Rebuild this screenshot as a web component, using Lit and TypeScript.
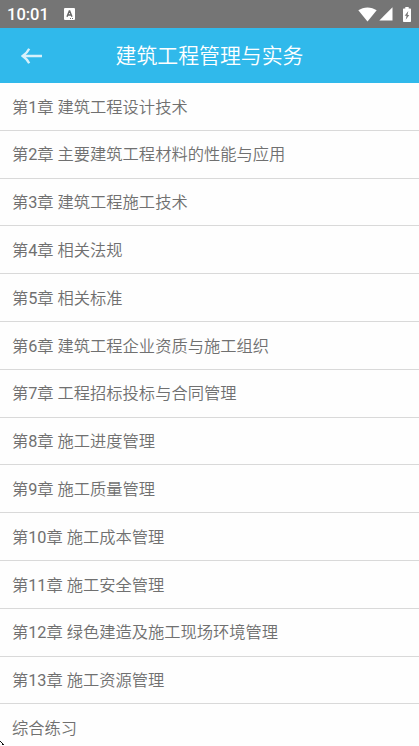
import { LitElement, html, css } from "lit";
import { customElement } from "lit/decorators.js";

const CHAPTERS = [
  "第1章 建筑工程设计技术",
  "第2章 主要建筑工程材料的性能与应用",
  "第3章 建筑工程施工技术",
  "第4章 相关法规",
  "第5章 相关标准",
  "第6章 建筑工程企业资质与施工组织",
  "第7章 工程招标投标与合同管理",
  "第8章 施工进度管理",
  "第9章 施工质量管理",
  "第10章 施工成本管理",
  "第11章 施工安全管理",
  "第12章 绿色建造及施工现场环境管理",
  "第13章 施工资源管理",
  "综合练习",
];

// Digits carry a slightly heavier weight than the Chinese text around them.
const withDigits = (name: string) =>
  name.split(/(\d+)/).map((part) => (/^\d+$/.test(part) ? html`<span class="digits">${part}</span>` : part));

@customElement("status-bar")
class StatusBar extends LitElement {
  static styles = css`
    :host {
      display: flex;
      align-items: center;
      height: 28px;
      flex: none;
      box-sizing: border-box;
      padding: 0 7px;
      background: #757575;
      color: #fff;
      font: 500 16.5px/28px Roboto, sans-serif;
    }
    .time { width: 57px; padding-top: 1px; }
    .spacer { flex: 1; }
    svg { display: block; flex: none; fill: #fff; }
    .wifi { margin-right: 2px; }
    .signal { margin-right: 10px; }
    .battery { margin-right: 1px; }
    .hole { fill: #757575; }
    .letter { fill: none; stroke: #666; stroke-width: 1.4; }
  `;
  render() {
    return html`
      <span class="time">10:01</span>
      <svg width="11" height="12" viewBox="0 0 11 12">
        <rect width="11" height="12" rx="1" />
        <path class="letter" d="M3 8.8 5.3 3h.4L8 8.8M3.8 7h3.4" />
        <path class="hole" d="M6 10h1v1H6zM8 10h1v1H8z" />
      </svg>
      <span class="spacer"></span>
      <svg class="wifi" width="19" height="15" viewBox="0 0 19 15">
        <path d="M0.3 3.3C5.5-.6 13.5-.6 18.7 3.3L9.5 14.6Z" />
      </svg>
      <svg class="signal" width="14" height="14" viewBox="0 0 14 14">
        <path d="M13.5 0.3V13.5H0.3Z" />
      </svg>
      <svg class="battery" width="8" height="15" viewBox="0 0 8 15">
        <path d="M2.3 0h3.4v1.6H7.3q.7 0 .7.7V14.3q0 .7-.7.7H.7Q0 15 0 14.3V2.3q0-.7.7-.7H2.3Z" />
        <path class="hole" d="M5.3 4 1.7 8.8H3.6L2.7 12.8 6.3 7.9H4.5Z" />
      </svg>
    `;
  }
}

@customElement("title-bar")
class TitleBar extends LitElement {
  static styles = css`
    :host {
      display: grid;
      grid-template-columns: 62px 1fr 62px;
      align-items: center;
      height: 55px;
      flex: none;
      background: #30b9eb;
      color: #fff;
    }
    svg { display: block; margin-left: 21px; fill: none; stroke: #d6f1fb; stroke-width: 2.3; }
    .title {
      margin: 0;
      text-align: center;
      white-space: nowrap;
      font: 350 20.9px/30px Roboto, "Noto Sans CJK SC", sans-serif;
    }
  `;
  render() {
    return html`
      <svg width="22" height="16" viewBox="0 0 22 16">
        <path d="M8.2 0.8Q6.5 4.6 1.6 8 6.5 11.4 8.2 15.2M1.6 8H21" />
      </svg>
      <h1 class="title">建筑工程管理与实务</h1>
    `;
  }
}

@customElement("app-root")
class AppRoot extends LitElement {
  static styles = css`
    :host {
      display: flex;
      flex-direction: column;
      position: relative;
      height: 746px;
      overflow: hidden;
      background: #fefefe;
    }
    .list { margin: 0; padding: 0; list-style: none; }
    .row {
      box-sizing: border-box;
      height: 47.8px;
      padding: 0.65px 12px 0 11.9px;
      border-bottom: 1px solid #d9d9d9;
      color: #707070;
      white-space: nowrap;
      font: 350 16.27px/47px Roboto, "Noto Sans CJK SC", sans-serif;
    }
    .digits { font-weight: 400; }
    .row:last-child { border-bottom: 0; }
    .cursor { position: absolute; left: 0; bottom: 0; display: block; fill: #111; }
  `;
  render() {
    return html`
      <status-bar></status-bar>
      <title-bar></title-bar>
      <ul class="list">
        ${CHAPTERS.map((name) => html`<li class="row">${withDigits(name)}</li>`)}
      </ul>
      <svg class="cursor" width="5" height="5" viewBox="0 0 5 5" shape-rendering="crispEdges">
        <path d="M0 0h1v1H0zM1 1h1v1H1zM2 2h1v1H2zM2 3h2v1H2z" />
      </svg>
    `;
  }
}
